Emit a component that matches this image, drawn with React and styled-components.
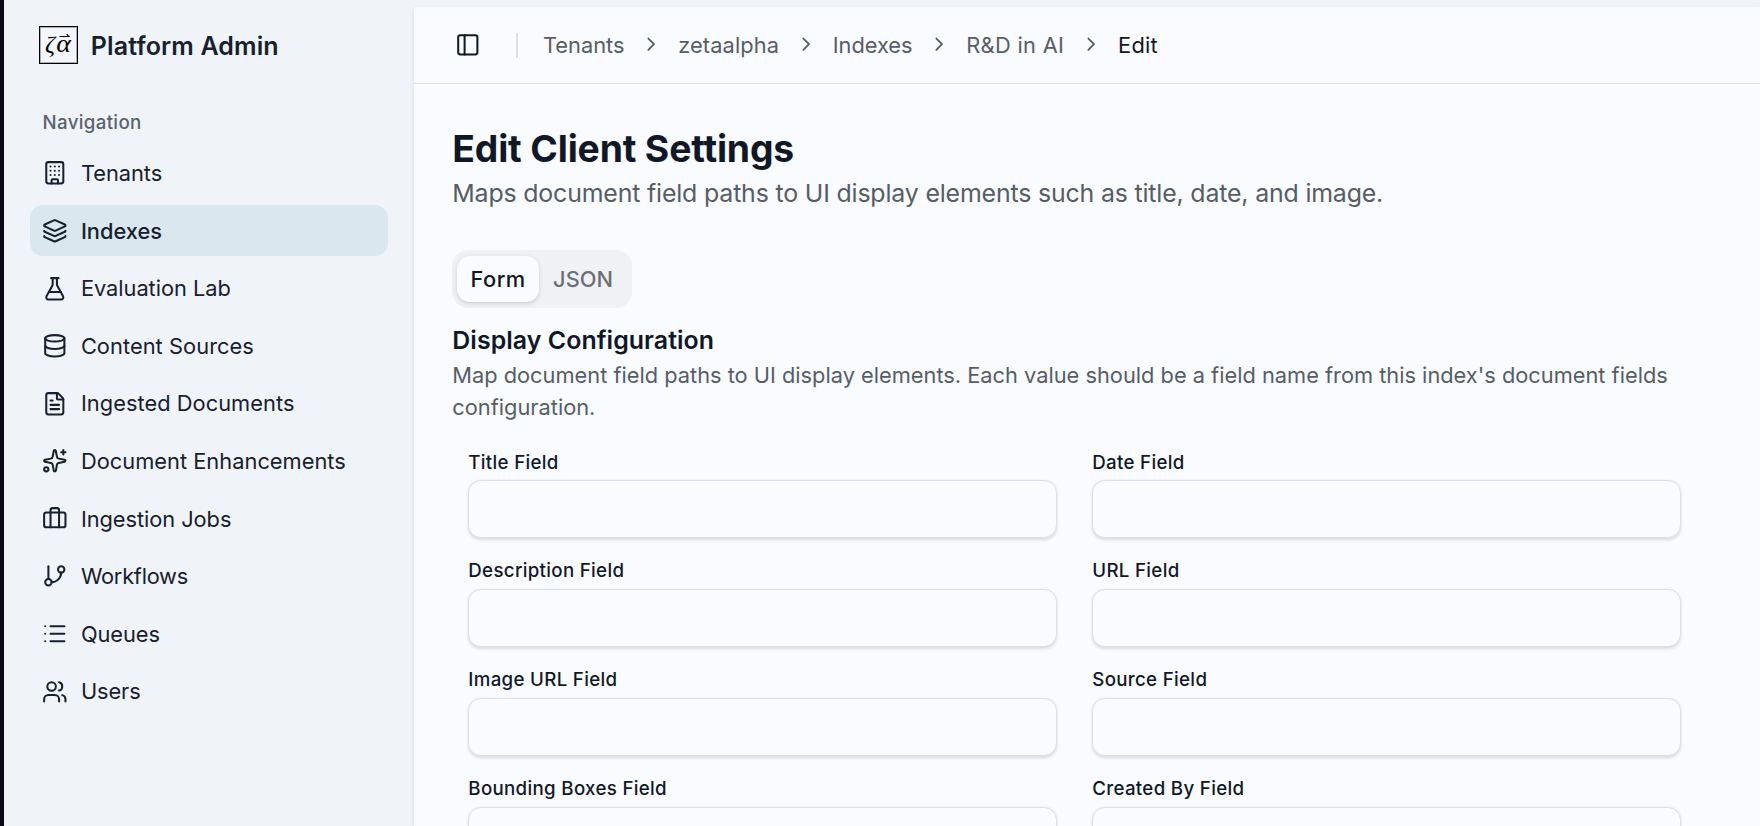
import React from "react";
import styled, { createGlobalStyle } from "styled-components";
import {
  Building,
  Layers,
  FlaskConical,
  Database,
  FileText,
  Sparkles,
  Briefcase,
  GitBranch,
  List,
  Users,
  PanelLeft,
  ChevronRight,
} from "lucide-react";

const GlobalStyle = createGlobalStyle`
  *, *::before, *::after { box-sizing: border-box; }
  body {
    margin: 0;
    background: #f0f4f9;
    color: #101828;
    font-family: Inter, "Liberation Sans", sans-serif;
    font-size: 21.8px;
  }
  h1, h2, p, ul, ol { margin: 0; padding: 0; }
  ul, ol { list-style: none; }
  button, input { font: inherit; color: inherit; }
`;

const Shell = styled.div`
  display: flex;
  height: 100vh;
  overflow: hidden;
  border-left: 4px solid #0c0a17;
`;

const Sidebar = styled.aside`
  flex: none;
  width: 410px;
  padding: 26px 26px 0;
`;

const Brand = styled.div`
  display: flex;
  align-items: center;
  gap: 12.8px;
  height: 38px;
  padding-left: 9px;
`;

const LogoSvg = styled.svg`
  display: block;
  flex: none;
  width: 39px;
  height: 38px;
`;

const BrandName = styled.span`
  padding-top: 2px;
  font-size: 25px;
  font-weight: 600;
  line-height: 36px;
  letter-spacing: 0.13px;
  color: #17202f;
  white-space: nowrap;
`;

const SectionLabel = styled.div`
  margin-top: 42.5px;
  padding-left: 12.5px;
  font-size: 18.7px;
  font-weight: 500;
  line-height: 32px;
  letter-spacing: 0.34px;
  color: #5a626e;
`;

const NavList = styled.ul`
  display: flex;
  flex-direction: column;
  gap: 6.4px;
  margin-top: 9.05px;
`;

const NavItem = styled.li`
  display: flex;
  align-items: center;
  gap: 13.3px;
  width: 358.4px;
  height: 51.2px;
  padding-left: 12px;
  border-radius: 12.8px;
  background: ${(p) => (p.$active ? "#dae7ee" : "transparent")};
  font-weight: ${(p) => (p.$active ? 500 : 400)};
  letter-spacing: ${(p) => p.$tracking || 0}px;
  color: #17202f;
  white-space: nowrap;

  svg { flex: none; }
`;

const Main = styled.main`
  flex: 1;
  min-width: 0;
  margin-top: 7px;
  background: #f9fbff;
  box-shadow: 0 1.6px 4.8px rgba(0, 0, 0, 0.1), 0 1.6px 3.2px -1.6px rgba(0, 0, 0, 0.1);
`;

const TopBar = styled.header`
  display: flex;
  align-items: center;
  height: 77px;
  padding-left: 41.2px;
  border-bottom: 1px solid #dcdfe4;
`;

const SidebarToggle = styled.button`
  display: flex;
  padding: 0;
  border: 0;
  background: none;
`;

const Divider = styled.span`
  width: 2px;
  height: 25px;
  margin: 0 25px 0 35.2px;
  background: #dcdfe4;
`;

const Crumbs = styled.ol`
  display: flex;
  align-items: center;
  gap: 15.7px;
`;

const Crumb = styled.li`
  color: ${(p) => (p.$current ? "#101828" : "#565d67")};
  line-height: 32px;
  letter-spacing: ${(p) => p.$tracking || 0}px;
  white-space: nowrap;
`;

const CrumbArrow = styled.li`
  display: flex;
  padding-bottom: 1.5px;
  color: #565d67;
`;

const Content = styled.section`
  width: 1283px;
  padding: 44.5px 0 0 38.3px;
`;

const Title = styled.h1`
  font-size: 37.3px;
  font-weight: 700;
  line-height: 40px;
  letter-spacing: -0.16px;
`;

const Subtitle = styled.p`
  margin-top: 4px;
  font-size: 24.9px;
  line-height: 40px;
  letter-spacing: -0.17px;
  color: #565d67;
`;

const Tabs = styled.div`
  display: flex;
  align-items: center;
  width: 180px;
  height: 58px;
  margin-top: 37.5px;
  padding: 0 4.8px;
  border-radius: 16px;
  background: #f0f1f5;
`;

const Tab = styled.button`
  flex: none;
  width: ${(p) => p.$width}px;
  height: 46px;
  padding: 0;
  border: 0;
  border-radius: 12.8px;
  background: ${(p) => (p.$active ? "#f9fbff" : "transparent")};
  box-shadow: ${(p) =>
    p.$active ? "0 1.6px 4.8px rgba(0,0,0,.1), 0 1.6px 3.2px -1.6px rgba(0,0,0,.1)" : "none"};
  color: ${(p) => (p.$active ? "#101828" : "#6a7079")};
  font-weight: 500;
  letter-spacing: ${(p) => (p.$active ? 0.5 : 0.06)}px;
`;

const SectionTitle = styled.h2`
  margin-top: 16px;
  font-size: 24.9px;
  font-weight: 600;
  line-height: 32px;
  letter-spacing: 0.06px;
`;

const SectionText = styled.p`
  margin-top: 3px;
  line-height: 32px;
  color: #565d67;
`;

const FieldGrid = styled.div`
  display: grid;
  grid-template-columns: 1fr 1fr;
  gap: 22.9px 35.2px;
  margin-top: 28.5px;
  padding: 0 16px;
`;

const Field = styled.label`
  display: flex;
  flex-direction: column;
  gap: 7.5px;
`;

const FieldLabel = styled.span`
  font-size: 18.7px;
  font-weight: 500;
  line-height: 21px;
  letter-spacing: 0.32px;
`;

const FieldInput = styled.input`
  width: 100%;
  height: 57.6px;
  padding: 0 19px;
  border: 1px solid #dcdfe4;
  border-radius: 12.8px;
  outline: none;
  background: #f9fbff;
  box-shadow: 0 1.6px 3.2px rgba(0, 0, 0, 0.13);
`;

const NAV = [
  { label: "Tenants", icon: Building, tracking: -0.04 },
  { label: "Indexes", icon: Layers, active: true },
  { label: "Evaluation Lab", icon: FlaskConical, tracking: -0.03 },
  { label: "Content Sources", icon: Database, tracking: 0.06 },
  { label: "Ingested Documents", icon: FileText, tracking: 0.05 },
  { label: "Document Enhancements", icon: Sparkles, tracking: 0.03 },
  { label: "Ingestion Jobs", icon: Briefcase, tracking: -0.05 },
  { label: "Workflows", icon: GitBranch, tracking: -0.25 },
  { label: "Queues", icon: List, tracking: -0.07 },
  { label: "Users", icon: Users, tracking: -0.1 },
];

const CRUMBS = [
  { label: "Tenants" },
  { label: "zetaalpha", tracking: 0.1 },
  { label: "Indexes", tracking: -0.05 },
  { label: "R&D in AI", tracking: 0.34 },
  { label: "Edit", tracking: 0.25 },
];

const FIELDS = [
  "Title Field",
  "Date Field",
  "Description Field",
  "URL Field",
  "Image URL Field",
  "Source Field",
  "Bounding Boxes Field",
  "Created By Field",
];

function Logo() {
  return (
    <LogoSvg viewBox="0 0 39 38" aria-label="Zeta Alpha">
      <rect x="0.5" y="0.5" width="38" height="37" fill="#f3f6fb" stroke="#000" />
      <rect x="1.5" y="1.5" width="36" height="35" fill="none" stroke="#a9acb0" />
      <g fontFamily='"Liberation Serif", serif' fontStyle="italic" fill="#000">
        <text x="0" y="0" fontSize="23" transform="translate(6 26) scale(1.08 1)">ζ</text>
        <text x="0" y="0" fontSize="24.5" transform="translate(17.3 26) scale(1.14 1)">α</text>
      </g>
      <path d="M20.5 10.5H30.5M27.8 8q.6 2 2.9 2.5" fill="none" stroke="#000" strokeWidth="1.1" />
    </LogoSvg>
  );
}

export default function App() {
  return (
    <>
      <GlobalStyle />
      <Shell>
        <Sidebar>
          <Brand>
            <Logo />
            <BrandName>Platform Admin</BrandName>
          </Brand>
          <SectionLabel>Navigation</SectionLabel>
          <NavList>
            {NAV.map(({ label, icon: Icon, active, tracking }) => (
              <NavItem key={label} $active={active} $tracking={tracking}>
                <Icon size={25.6} strokeWidth={1.9} />
                <span>{label}</span>
              </NavItem>
            ))}
          </NavList>
        </Sidebar>
        <Main>
          <TopBar>
            <SidebarToggle aria-label="Toggle sidebar">
              <PanelLeft size={25.6} strokeWidth={1.9} />
            </SidebarToggle>
            <Divider />
            <Crumbs>
              {CRUMBS.map(({ label, tracking }, i) => (
                <React.Fragment key={label}>
                  {i > 0 && (
                    <CrumbArrow aria-hidden="true">
                      <ChevronRight size={22.4} strokeWidth={2} />
                    </CrumbArrow>
                  )}
                  <Crumb $current={i === CRUMBS.length - 1} $tracking={tracking}>
                    {label}
                  </Crumb>
                </React.Fragment>
              ))}
            </Crumbs>
          </TopBar>
          <Content>
            <Title>Edit Client Settings</Title>
            <Subtitle>
              Maps document field paths to UI display elements such as title, date, and image.
            </Subtitle>
            <Tabs>
              <Tab $active $width={82}>Form</Tab>
              <Tab $width={88}>JSON</Tab>
            </Tabs>
            <SectionTitle>Display Configuration</SectionTitle>
            <SectionText>
              Map document field paths to UI display elements. Each value should be a field name
              from this index's document fields configuration.
            </SectionText>
            <FieldGrid>
              {FIELDS.map((name) => (
                <Field key={name}>
                  <FieldLabel>{name}</FieldLabel>
                  <FieldInput />
                </Field>
              ))}
            </FieldGrid>
          </Content>
        </Main>
      </Shell>
    </>
  );
}
